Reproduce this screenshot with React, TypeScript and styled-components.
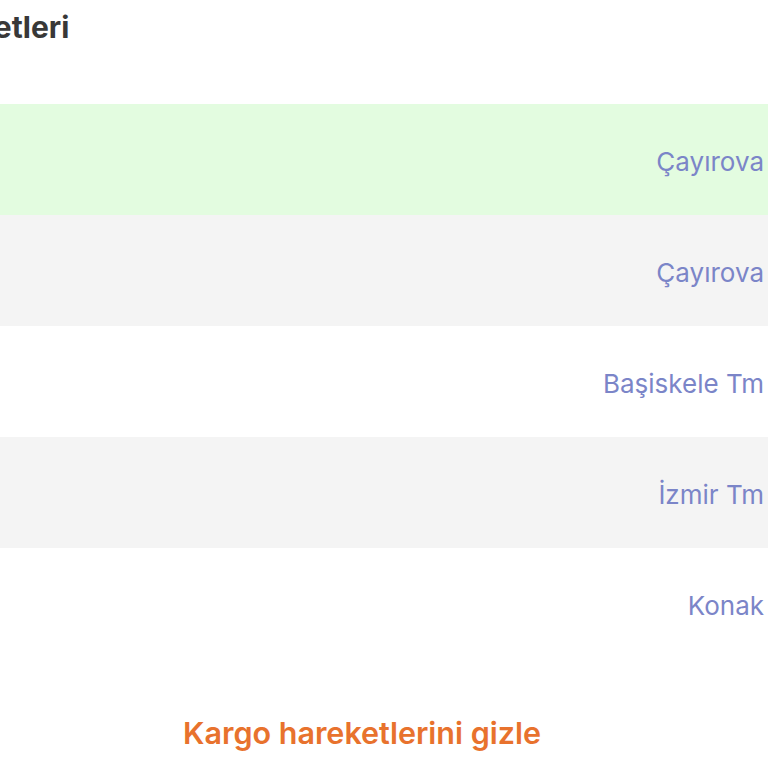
import React, { useState } from "react";
import styled, { createGlobalStyle } from "styled-components";

const GlobalStyle = createGlobalStyle`
  html, body {
    margin: 0;
    padding: 0;
    background: #ffffff;
    overflow: hidden;
  }
  body {
    font-family: Inter, "Noto Sans", "Liberation Sans", sans-serif;
  }
`;

interface Movement {
  date: string;
  place: string;
  status: string;
}

const movements: Movement[] = [
  { date: "14.03", place: "Çayırova", status: "Teslim edildi" },
  { date: "14.03", place: "Çayırova", status: "Dağıtımda" },
  { date: "13.03", place: "Başiskele Tm", status: "Transfer" },
  { date: "12.03", place: "İzmir Tm", status: "Transfer" },
  { date: "12.03", place: "Konak", status: "Kabul edildi" },
];

const App = () => {
  const [open, setOpen] = useState(true);

  return (
    <>
      <GlobalStyle />
      <Panel>
        <Title>Kargo Hareketleri</Title>
        {open && (
          <Table>
            {movements.map((m, i) => (
              <Row key={i} tone={i === 0 ? "latest" : i % 2 === 1 ? "odd" : "even"}>
                <Cell>{m.date}</Cell>
                <Place>{m.place}</Place>
                <Cell>{m.status}</Cell>
              </Row>
            ))}
          </Table>
        )}
        <Toggle onClick={() => setOpen(!open)}>
          {open ? "Kargo hareketlerini gizle" : "Kargo hareketlerini göster"}
        </Toggle>
      </Panel>
    </>
  );
};

const Panel = styled.div`
  width: 1104px;
  margin-left: -190px;
  display: flex;
  flex-direction: column;
`;

const Title = styled.h2`
  margin: 0;
  padding: 8px 16px 0 3px;
  height: 104px;
  box-sizing: border-box;
  font-size: 30px;
  line-height: 38px;
  font-weight: 700;
  color: #383838;
`;

const Table = styled.div`
  display: flex;
  flex-direction: column;
`;

const Row = styled.div<{ tone: "latest" | "odd" | "even" }>`
  display: grid;
  grid-template-columns: 180px 1fr 148px;
  align-items: center;
  height: 111px;
  padding-top: 4px;
  box-sizing: border-box;
  background: ${({ tone }) =>
    tone === "latest" ? "#e3fce0" : tone === "odd" ? "#f4f4f4" : "#ffffff"};
`;

const Cell = styled.div`
  padding: 0 10px;
  font-size: 26px;
  color: #7b85c8;
  white-space: nowrap;
  overflow: hidden;
`;

const Place = styled.div`
  padding-right: 2px;
  text-align: right;
  font-size: 26px;
  line-height: 32px;
  color: #7b85c8;
  white-space: nowrap;
`;

const Toggle = styled.button`
  align-self: center;
  margin-top: 54px;
  background: none;
  border: 0;
  padding: 0;
  font-family: Inter, "Noto Sans", "Liberation Sans", sans-serif;
  font-size: 30.5px;
  line-height: 40px;
  font-weight: 600;
  color: #e8722d;
  cursor: pointer;
`;

export default App;
